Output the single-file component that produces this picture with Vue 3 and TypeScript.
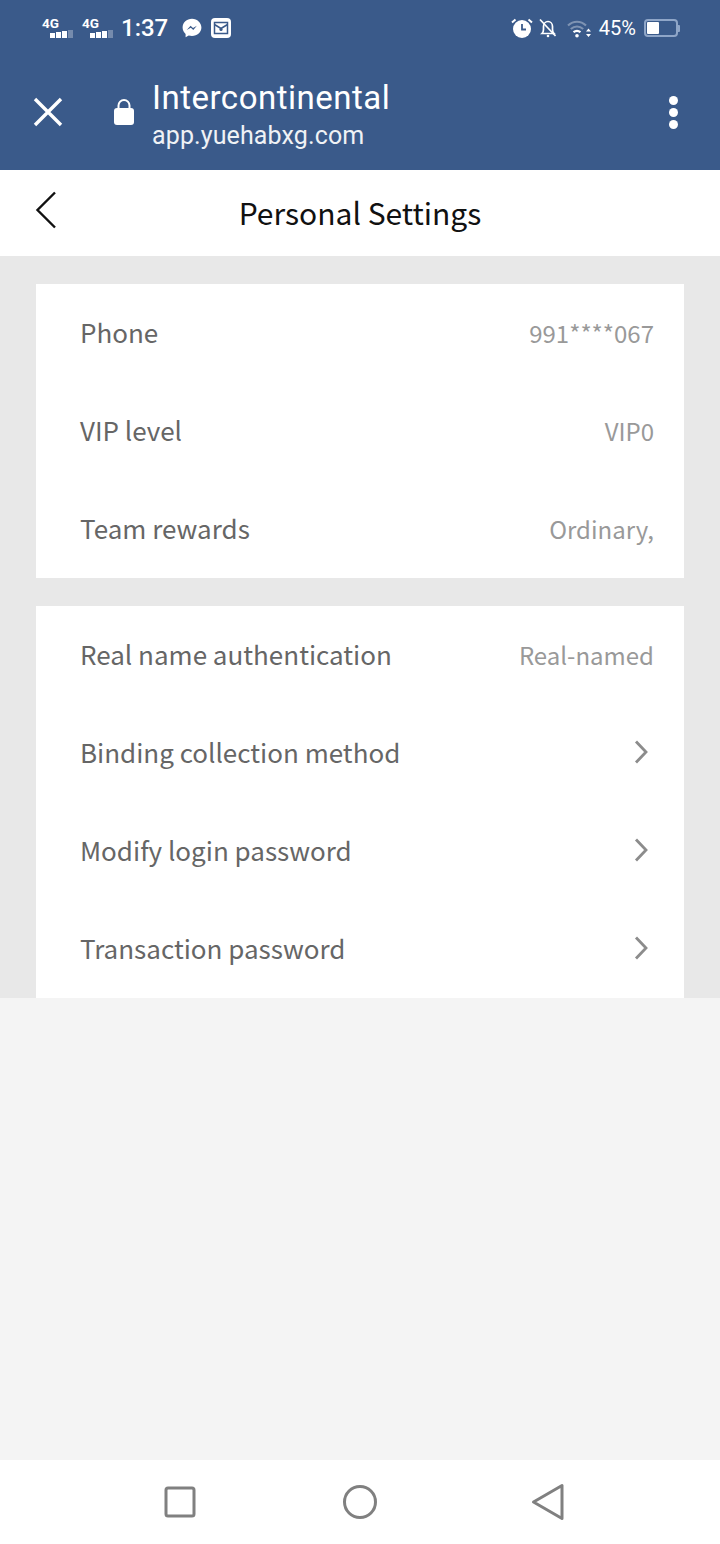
<script setup lang="ts">
interface Row { label: string; value?: string; arrow?: boolean }
const infoRows: Row[] = [
  { label: 'Phone', value: '991****067' },
  { label: 'VIP level', value: 'VIP0' },
  { label: 'Team rewards', value: 'Ordinary,' },
]
const actionRows: Row[] = [
  { label: 'Real name authentication', value: 'Real-named' },
  { label: 'Binding collection method', arrow: true },
  { label: 'Modify login password', arrow: true },
  { label: 'Transaction password', arrow: true },
]
const groups = [infoRows, actionRows]
</script>

<template>
  <div class="page">
    <div class="browser">
      <div class="status">
        <div class="status-left">
          <div v-for="n in 2" :key="n" class="signal">
            <span class="g">4G</span>
            <svg width="32" height="11" viewBox="0 0 32 11">
              <rect x="8" y="5" width="5" height="5" fill="#fff" />
              <rect x="14" y="4" width="5" height="6" fill="#fff" />
              <rect x="20" y="3" width="5" height="7" fill="#fff" />
              <rect x="26" y="2" width="5" height="8" fill="#fff" opacity=".3" />
            </svg>
          </div>
          <span class="time">1:37</span>
          <svg class="msg" width="20" height="20" viewBox="0 0 20 20">
            <path d="M10 .8C4.7.8.6 4.6.6 9.5c0 2.6 1.1 4.8 3 6.4v3.3l3.1-1.7c1 .3 2.1.4 3.3.4 5.3 0 9.4-3.8 9.4-8.4S15.300.8 10 .8z" fill="#fff" />
            <path d="M4.700 12l3.900-4.200 2.400 2.300 3.900-2.300-3.600 4.200-2.500-2.200z" fill="#3a5a8a" />
          </svg>
          <svg width="20" height="20" viewBox="0 0 20 20">
            <rect x="0" y="0" width="20" height="20" rx="4" fill="#fff" />
            <path d="M3.500 4.500h13v11h-13zM3.500 6.500l6.500 4 6.500-4" fill="none" stroke="#3a5a8a" stroke-width="1.500" />
            <circle cx="10" cy="11.500" r="1.600" fill="#3a5a8a" />
          </svg>
        </div>
        <div class="status-right">
          <svg class="alarm" width="22" height="20" viewBox="0 0 22 20">
            <circle cx="11" cy="11" r="9" fill="#fff" />
            <path d="M11 6v5.500h4" fill="none" stroke="#3a5a8a" stroke-width="1.800" />
            <path d="M1 4.500 4.500 1.500M21 4.500 17.500 1.500" stroke="#fff" stroke-width="2" />
          </svg>
          <svg class="bell" width="18" height="20" viewBox="0 0 18 20">
            <path d="M3 15.500c1.200-1.200 1.500-2 1.500-4V8.500c0-2.800 2-5 4.500-5s4.500 2.200 4.500 5v3c0 2 .3 2.800 1.500 4z" fill="none" stroke="#fff" stroke-width="1.700" />
            <path d="M1 1.500 16.500 18" stroke="#fff" stroke-width="1.700" />
            <circle cx="9" cy="18" r="1.300" fill="#fff" />
          </svg>
          <svg class="wifi" width="24" height="19" viewBox="0 0 24 19">
            <path d="M1 6.500C6.500 1.500 13.500 1.500 19 6.500" fill="none" stroke="#fff" stroke-opacity=".35" stroke-width="2.200" />
            <path d="M3.800 10c3.700-3.200 8.700-3.200 12.400 0" fill="none" stroke="#fff" stroke-opacity=".35" stroke-width="2.200" />
            <path d="M6.500 13.200c2-1.600 5-1.600 7 0" fill="none" stroke="#fff" stroke-width="2.200" />
            <circle cx="10" cy="16.800" r="1.800" fill="#fff" />
            <path d="M19 12.500l2.500-3 2.500 3zM19 15l2.500 3 2.500-3z" fill="#fff" />
          </svg>
          <span class="pct">45%</span>
          <div class="battery"><div class="battery-fill"></div></div>
          <div class="battery-tip"></div>
        </div>
      </div>
      <div class="toolbar">
        <svg class="close" width="30" height="30" viewBox="0 0 30 30">
          <path d="M2 2 28 28M28 2 2 28" stroke="#fff" stroke-width="3.400" />
        </svg>
        <svg class="lock" width="22" height="28" viewBox="0 0 22 28">
          <path d="M5.500 12V7.500a5.500 5.500 0 0 1 11 0V12" fill="none" stroke="#fff" stroke-width="2" />
          <rect x="1" y="10" width="20" height="17" rx="3" fill="#fff" />
        </svg>
        <div class="titles">
          <div class="site">Intercontinental</div>
          <div class="url">app.yuehabxg.com</div>
        </div>
        <div class="dots"><i></i><i></i><i></i></div>
      </div>
    </div>

    <header class="nav">
      <svg class="back" width="24" height="40" viewBox="0 0 24 40">
        <path d="M21 2.500 3.500 20 21 37.500" fill="none" stroke="#111" stroke-width="2.400" />
      </svg>
      <h1>Personal Settings</h1>
    </header>

    <main class="content">
      <section v-for="(group, i) in groups" :key="i" class="card">
        <div v-for="row in group" :key="row.label" class="row">
          <span class="label">{{ row.label }}</span>
          <span v-if="row.value" class="value">{{ row.value }}</span>
          <svg v-if="row.arrow" class="arrow" width="14" height="24" viewBox="0 0 14 24">
            <path d="M2 1.500 12 12 2 22.500" fill="none" stroke="#8c8c8c" stroke-width="2.800" />
          </svg>
        </div>
      </section>
    </main>

    <div class="filler"></div>

    <footer class="sysnav">
      <svg width="32" height="32" viewBox="0 0 32 32">
        <rect x="2" y="2" width="28" height="28" rx="2" fill="none" stroke="#808080" stroke-width="3" />
      </svg>
      <svg class="home" width="36" height="36" viewBox="0 0 36 36">
        <circle cx="18" cy="18" r="15.500" fill="none" stroke="#808080" stroke-width="3" />
      </svg>
      <svg class="tri" width="34" height="38" viewBox="0 0 34 38">
        <path d="M31 2.500V35.500L2.500 19z" fill="none" stroke="#808080" stroke-width="3" stroke-linejoin="round" />
      </svg>
    </footer>
  </div>
</template>

<style>
html, body { margin: 0; padding: 0; background: #f4f4f4; }
</style>

<style scoped>
.page {
  width: 720px;
  height: 1544px;
  display: flex;
  flex-direction: column;
  font-family: "Noto Sans CJK SC", "Noto Sans", sans-serif;
  background: #f4f4f4;
}
.browser {
  height: 170px;
  background: #3a5a8a;
  color: #fff;
  font-family: Roboto, sans-serif;
  flex: none;
}
.status {
  height: 56px;
  display: flex;
  justify-content: space-between;
  align-items: center;
  padding: 0 40px 0 42px;
}
.status-left, .status-right { display: flex; align-items: center; }
.signal {
  position: relative;
  width: 40px;
  height: 26px;
}
.signal svg { position: absolute; left: 0; top: 13px; }
.signal .g {
  position: absolute;
  left: 0;
  top: 0;
  font-size: 13.500px;
  line-height: 16px;
  font-weight: 700;
}
.time {
  font-size: 24px;
  line-height: 28px;
  margin: 0 14px 0 -1px;
  font-weight: 500;
}
.msg { margin-right: 9px; }
.alarm { margin-right: 6px; }
.bell { margin-right: 10px; }
.wifi { margin-right: 8px; }
.pct { font-size: 20px; margin-right: 8px; }
.battery {
  width: 28px;
  height: 12px;
  border: 2px solid #8fa6c8;
  border-radius: 4px;
  padding: 1px;
}
.battery-fill { width: 12px; height: 12px; background: #fff; border-radius: 1px; }
.battery-tip { width: 2px; height: 7px; background: #8fa6c8; border-radius: 0 1px 1px 0; }
.toolbar {
  height: 114px;
  display: flex;
  align-items: flex-start;
  position: relative;
}
.close { margin: 41px 0 0 33px; width: 30px; height: 30px; }
.lock { margin: 42px 0 0 113px; position: absolute; left: 0; }
.titles { margin-left: 89px; padding-top: 22px; }
.site { font-size: 33px; line-height: 40px; letter-spacing: .5px; }
.url { font-size: 25px; line-height: 30px; margin-top: 3px; opacity: .92; letter-spacing: .12px; }
.dots {
  position: absolute;
  right: 42px;
  top: 40px;
  display: flex;
  flex-direction: column;
  gap: 3px;
}
.dots i { width: 9px; height: 9px; border-radius: 50%; background: #fff; display: block; }
.nav {
  height: 86px;
  background: #fff;
  flex: none;
  position: relative;
  display: flex;
  justify-content: center;
  align-items: center;
}
.nav h1 {
  margin: 0;
  font-size: 30px;
  font-weight: 400;
  color: #111;
  line-height: 40px;
  position: relative;
  top: -1px;
}
.back { position: absolute; left: 34px; top: 20px; }
.content {
  background: #e8e8e8;
  padding: 28px 36px 0;
  display: flex;
  flex-direction: column;
  gap: 28px;
  flex: none;
}
.card { background: #fff; padding: 0 30px 0 44px; }
.row {
  height: 98px;
  display: flex;
  align-items: center;
  justify-content: space-between;
}
.label { font-size: 26px; color: #666; position: relative; top: -2px; }
.value { font-size: 24px; color: #999; position: relative; top: -1px; }
.arrow { margin-right: 6px; position: relative; top: -1px; }
.filler { flex: 1; }
.sysnav {
  height: 84px;
  flex: none;
  background: #fff;
  display: flex;
  align-items: center;
  padding-left: 164px;
}
.home { margin-left: 146px; }
.tri { margin-left: 153px; }
</style>
